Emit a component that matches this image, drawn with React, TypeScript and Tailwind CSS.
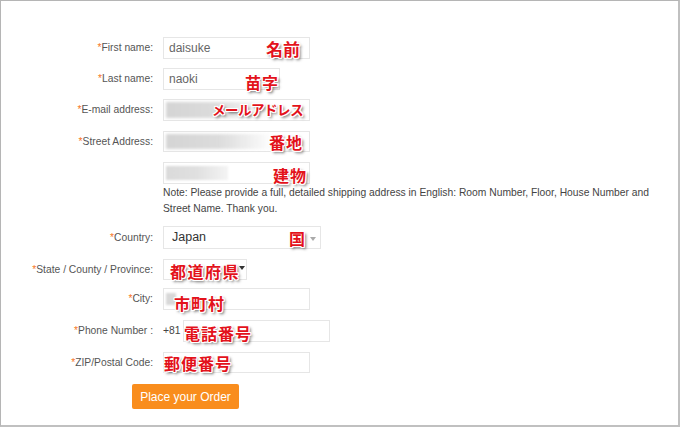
import React from "react";

const ann =
  "absolute whitespace-nowrap font-bold leading-none text-[#e3121b] font-['Noto_Sans_CJK_JP','Noto_Sans_CJK_SC',sans-serif] [text-shadow:1px_0_0_#fff,-1px_0_0_#fff,0_1px_0_#fff,0_-1px_0_#fff,1px_1px_0_#fff,-1px_-1px_0_#fff,1px_-1px_0_#fff,-1px_1px_0_#fff,2px_2px_3px_rgba(0,0,0,0.65)]";

function Label({ text }: { text: string }) {
  return (
    <div className="w-[152px] shrink-0 text-right text-[10.3px] text-[#555] whitespace-nowrap">
      <span className="text-[#f7761f]">*</span>
      {text}
    </div>
  );
}

function Blur({ w }: { w: number }) {
  return (
    <div
      className="absolute left-[2px] top-[2px] bottom-[2px] blur-[1.5px] bg-gradient-to-r from-[#d4d4d4] via-[#dcdcdc] to-transparent"
      style={{ width: w }}
    />
  );
}

export default function App() {
  return (
    <div className="w-[680px] h-[427px] bg-white border border-[#b5b5b5] border-r-2 border-b-2 border-r-[#c0c0c0] border-b-[#c0c0c0] font-['Liberation_Sans',Arial,sans-serif] overflow-hidden">
      <div className="flex flex-col pt-[36px] pl-0">
        {/* First name */}
        <div className="flex items-center h-[22px]">
          <Label text="First name:" />
          <div className="relative ml-[10px] w-[147px] h-[22px] border border-[#e6e6e6] flex items-center pl-[5px] text-[12px] text-[#666]">
            daisuke
            <span className={ann + " text-[17px] tracking-[0px] left-[102px] top-[2px]"}>名前</span>
          </div>
        </div>
        {/* Last name */}
        <div className="flex items-center h-[22px] mt-[9px]">
          <Label text="Last name:" />
          <div className="relative ml-[10px] w-[117px] h-[22px] border border-[#e6e6e6] flex items-center pl-[5px] text-[12px] text-[#666]">
            naoki
            <span className={ann + " text-[16px] tracking-[1px] left-[81px] top-[5px]"}>苗字</span>
          </div>
        </div>
        {/* Email */}
        <div className="flex items-center h-[22px] mt-[9px]">
          <Label text="E-mail address:" />
          <div className="relative ml-[10px] w-[147px] h-[22px] border border-[#e6e6e6]">
            <Blur w={105} />
            <span className={ann + " text-[13.5px] tracking-[-0.5px] left-[48px] top-[3px]"}>メールアドレス</span>
          </div>
        </div>
        {/* Street */}
        <div className="flex items-center h-[21px] mt-[10px]">
          <Label text="Street Address:" />
          <div className="relative ml-[10px] w-[147px] h-[21px] border border-[#e6e6e6]">
            <Blur w={108} />
            <span className={ann + " text-[16px] tracking-[1px] left-[105px] top-[2px]"}>番地</span>
          </div>
        </div>
        {/* Building */}
        <div className="flex items-center h-[22px] mt-[10px]">
          <div className="w-[152px] shrink-0" />
          <div className="relative ml-[10px] w-[147px] h-[22px] border border-[#e6e6e6]">
            <div className="absolute left-[2px] top-[3px] bottom-[3px] w-[62px] blur-[1px] bg-gradient-to-r from-[#dadada] via-[#e0e0e0] to-[#f4f4f4]" />
            <span className={ann + " text-[16px] tracking-[1px] left-[109px] top-[4px]"}>建物</span>
          </div>
        </div>
        {/* Note */}
        <div className="flex mt-[1px]">
          <div className="w-[152px] shrink-0" />
          <div className="ml-[10px] text-[10.3px] leading-[16px] text-[#444] whitespace-nowrap">
            Note: Please provide a full, detailed shipping address in English: Room Number, Floor, House Number and
            <br />
            Street Name. Thank you.
          </div>
        </div>
        {/* Country */}
        <div className="flex items-center h-[23px] mt-[9px]">
          <Label text="Country:" />
          <div className="relative ml-[10px] w-[158px] h-[23px] border border-[#e6e6e6] flex items-center pl-[8px] text-[12.5px] text-[#333]">
            Japan
            <span className={ann + " text-[16px] left-[125px] top-[3px]"}>国</span>
            <span className="absolute right-[4px] top-[10px] w-0 h-0 border-l-[3px] border-r-[3px] border-t-[4px] border-l-transparent border-r-transparent border-t-[#aaa]" />
          </div>
        </div>
        {/* State */}
        <div className="flex items-center h-[21px] mt-[10px]">
          <Label text="State / County / Province:" />
          <div className="relative ml-[10px] w-[84px] h-[21px] border border-[#e6e6e6]">
            <span className={ann + " text-[16px] tracking-[1.5px] left-[6px] top-[3px]"}>都道府県</span>
            <span className="absolute left-[75px] top-[6px] w-0 h-0 border-l-[3px] border-r-[3px] border-t-[4px] border-l-transparent border-r-transparent border-t-[#333]" />
          </div>
        </div>
        {/* City */}
        <div className="flex items-center h-[22px] mt-[8px]">
          <Label text="City:" />
          <div className="relative ml-[10px] w-[147px] h-[22px] border border-[#e6e6e6]">
            <div className="absolute left-[2px] top-[4px] bottom-[4px] w-[10px] blur-[1px] bg-[#d8d8d8]" />
            <span className={ann + " text-[16px] tracking-[1px] left-[10px] top-[6px]"}>市町村</span>
          </div>
        </div>
        {/* Phone */}
        <div className="flex items-center h-[22px] mt-[10px]">
          <Label text="Phone Number :" />
          <div className="ml-[10px] text-[10.3px] text-[#444] w-[20px]">+81</div>
          <div className="relative w-[147px] h-[22px] border border-[#e6e6e6]">
            <span className={ann + " text-[16px] tracking-[1px] left-[0px] top-[4px]"}>電話番号</span>
          </div>
        </div>
        {/* ZIP */}
        <div className="flex items-center h-[21px] mt-[10px]">
          <Label text="ZIP/Postal Code:" />
          <div className="relative ml-[10px] w-[147px] h-[21px] border border-[#e6e6e6]">
            <span className={ann + " text-[16px] tracking-[1px] left-[0px] top-[2px]"}>郵便番号</span>
          </div>
        </div>
        {/* Button */}
        <div className="flex mt-[11px] pl-[131px]">
          <div className="w-[107px] h-[25px] rounded-[2px] bg-[#f98d1d] text-white text-[12px] flex items-center justify-center">
            Place your Order
          </div>
        </div>
      </div>
    </div>
  );
}
